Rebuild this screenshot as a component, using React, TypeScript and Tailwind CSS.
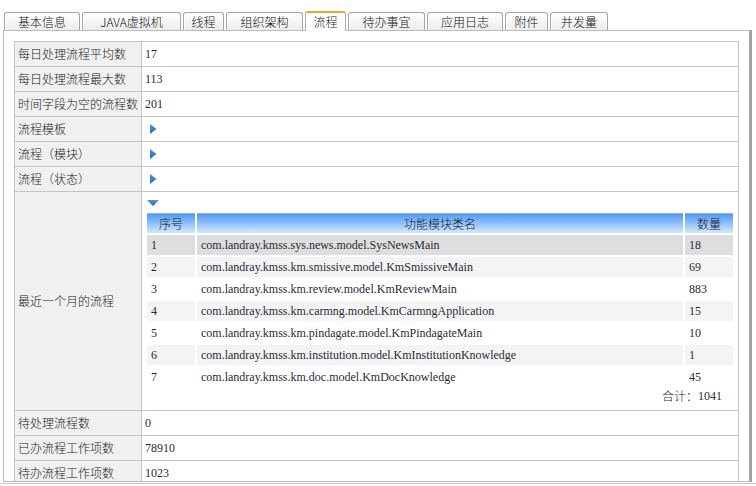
import React from 'react';

const tabs = [
  { label: '基本信息', w: 'w-[76px]' },
  { label: 'JAVA虚拟机', w: 'w-[99px]' },
  { label: '线程', w: 'w-[41px]' },
  { label: '组织架构', w: 'w-[77px]' },
  { label: '流程', w: 'w-[41px]', active: true },
  { label: '待办事宜', w: 'w-[77px]' },
  { label: '应用日志', w: 'w-[76px]' },
  { label: '附件', w: 'w-[43px]' },
  { label: '并发量', w: 'w-[58px]' },
];

const modules = [
  { id: 1, name: 'com.landray.kmss.sys.news.model.SysNewsMain', count: 18 },
  { id: 2, name: 'com.landray.kmss.km.smissive.model.KmSmissiveMain', count: 69 },
  { id: 3, name: 'com.landray.kmss.km.review.model.KmReviewMain', count: 883 },
  { id: 4, name: 'com.landray.kmss.km.carmng.model.KmCarmngApplication', count: 15 },
  { id: 5, name: 'com.landray.kmss.km.pindagate.model.KmPindagateMain', count: 10 },
  { id: 6, name: 'com.landray.kmss.km.institution.model.KmInstitutionKnowledge', count: 1 },
  { id: 7, name: 'com.landray.kmss.km.doc.model.KmDocKnowledge', count: 45 },
];

const rowBg = (i: number) => {
  if (i === 0) return 'bg-[#dedede]';
  return i % 2 === 1 ? 'bg-[#f4f4f4]' : 'bg-white';
};

const ArrowRight = () => (
  <svg width="7" height="10" viewBox="0 0 7 10" className="block">
    <defs>
      <linearGradient id="ar" x1="0" y1="0" x2="0" y2="1">
        <stop offset="0" stopColor="#4f95dc" />
        <stop offset="1" stopColor="#2668b8" />
      </linearGradient>
    </defs>
    <polygon points="0,0 6.5,5 0,10" fill="url(#ar)" />
  </svg>
);

const ArrowDown = () => (
  <svg width="12" height="6" viewBox="0 0 12 6" className="block">
    <defs>
      <linearGradient id="ad" x1="0" y1="0" x2="0" y2="1">
        <stop offset="0" stopColor="#4f95dc" />
        <stop offset="1" stopColor="#2668b8" />
      </linearGradient>
    </defs>
    <polygon points="0,0 12,0 6,6" fill="url(#ad)" />
  </svg>
);

const Row = ({ label, children }: { label: string; children: React.ReactNode }) => (
  <div className="flex h-[25px]">
    <div className="w-[127px] shrink-0 bg-[#f0f0f0] border-r border-b border-[#c4c4c4] pl-[3px] flex items-center text-[12px] text-[#222] whitespace-nowrap overflow-hidden">
      {label}
    </div>
    <div className="w-[597px] shrink-0 border-r border-b border-[#c4c4c4] font-['Liberation_Serif','Noto_Sans_CJK_SC',serif] font-normal text-[12px] text-[#2a2a3a]">
      {children}
    </div>
  </div>
);

const Value = ({ v }: { v: string }) => <div className="h-full flex items-center pl-[3px]">{v}</div>;

const Expand = () => (
  <div className="h-full flex items-center pl-[8px]">
    <ArrowRight />
  </div>
);

const MonthTable = () => (
  <div className="px-[5px] pt-[8px] pb-[4px]">
    <ArrowDown />
    <div className="mt-[7px] grid grid-cols-[48px_486px_48px] gap-[2px]">
      {['序号', '功能模块类名', '数量'].map((h) => (
        <div
          key={h}
          className="h-[20px] border-t border-[#8fb2e6] bg-linear-to-b from-[#4b99f4] to-[#d4e8fe] flex items-center justify-center font-['Noto_Sans_CJK_SC',sans-serif] font-light text-[12px] text-[#1a1a1a]"
        >
          {h}
        </div>
      ))}
      {modules.map((m, i) => (
        <React.Fragment key={m.id}>
          <div className={`h-[20px] flex items-center pl-[4px] ${rowBg(i)}`}>{m.id}</div>
          <div className={`h-[20px] flex items-center pl-[4px] ${rowBg(i)}`}>{m.name}</div>
          <div className={`h-[20px] flex items-center pl-[4px] ${rowBg(i)}`}>{m.count}</div>
        </React.Fragment>
      ))}
    </div>
    <div className="h-[16px] mt-[1px] flex items-center justify-end pr-[11px]">
      <span className="font-['Noto_Sans_CJK_SC',sans-serif] font-light">合计：</span>
      <span>1041</span>
    </div>
  </div>
);

export default function App() {
  return (
    <div className="w-[756px] h-[486px] bg-white overflow-hidden font-['Noto_Sans_CJK_SC',sans-serif] font-light leading-none">
      <div className="pt-[11px] pl-[4px]">
        <div className="flex items-end gap-[2px] h-[19px]">
          {tabs.map((t) =>
            t.active ? (
              <div
                key={t.label}
                className={`${t.w} h-[20px] mb-[-1px] relative z-10 rounded-t-[3px] border-x border-t-2 border-[#b0b0b0] border-t-[#f0a22e] bg-white flex items-center justify-center text-[12px] text-[#222]`}
              >
                {t.label}
              </div>
            ) : (
              <div
                key={t.label}
                className={`${t.w} h-[18px] rounded-t-[3px] border-x border-t border-[#a6a6a6] bg-linear-to-b from-white to-[#ececec] flex items-center justify-center text-[12px] text-[#111] shadow-[inset_1px_1px_0_#fff]`}
              >
                {t.label}
              </div>
            )
          )}
        </div>
      </div>
      <div className="ml-[3px] w-[749px] h-[452px] border-l border-t border-b border-[#bcbcbc] border-r-[3px] border-r-[#a3a3a3] overflow-hidden pt-[10px] pl-[10px] pr-[10px]">
        <div className="w-[725px] border-l border-t border-[#c4c4c4]">
          <Row label="每日处理流程平均数"><Value v="17" /></Row>
          <Row label="每日处理流程最大数"><Value v="113" /></Row>
          <Row label="时间字段为空的流程数"><Value v="201" /></Row>
          <Row label="流程模板"><Expand /></Row>
          <Row label="流程（模块）"><Expand /></Row>
          <Row label="流程（状态）"><Expand /></Row>
          <div className="flex h-[219px]">
            <div className="w-[127px] shrink-0 bg-[#f0f0f0] border-r border-b border-[#c4c4c4] pl-[3px] flex items-center text-[12px] text-[#222]">
              最近一个月的流程
            </div>
            <div className="w-[597px] shrink-0 border-r border-b border-[#c4c4c4] font-['Liberation_Serif','Noto_Sans_CJK_SC',serif] font-normal text-[12px] text-[#2a2a3a]">
              <MonthTable />
            </div>
          </div>
          <Row label="待处理流程数"><Value v="0" /></Row>
          <Row label="已办流程工作项数"><Value v="78910" /></Row>
          <Row label="待办流程工作项数"><Value v="1023" /></Row>
        </div>
      </div>
      <div className="mt-[1px] h-[1px] bg-[#c8c8c8]" />
    </div>
  );
}
